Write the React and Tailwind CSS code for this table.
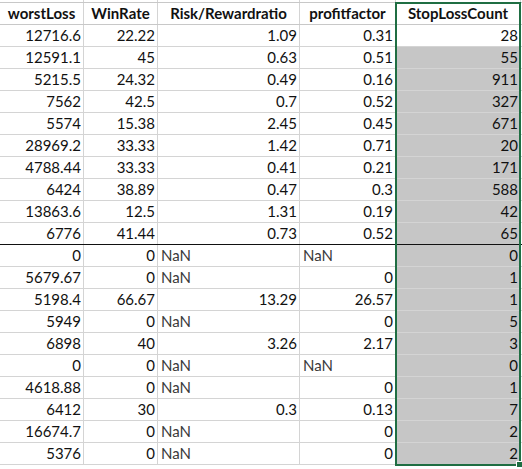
import React from "react";

const rows = [
  ["12716.6", "22.22", "1.09", "0.31", "28"],
  ["12591.1", "45", "0.63", "0.51", "55"],
  ["5215.5", "24.32", "0.49", "0.16", "911"],
  ["7562", "42.5", "0.7", "0.52", "327"],
  ["5574", "15.38", "2.45", "0.45", "671"],
  ["28969.2", "33.33", "1.42", "0.71", "20"],
  ["4788.44", "33.33", "0.41", "0.21", "171"],
  ["6424", "38.89", "0.47", "0.3", "588"],
  ["13863.6", "12.5", "1.31", "0.19", "42"],
  ["6776", "41.44", "0.73", "0.52", "65"],
  ["0", "0", "NaN", "NaN", "0"],
  ["5679.67", "0", "NaN", "0", "1"],
  ["5198.4", "66.67", "13.29", "26.57", "1"],
  ["5949", "0", "NaN", "0", "5"],
  ["6898", "40", "3.26", "2.17", "3"],
  ["0", "0", "NaN", "NaN", "0"],
  ["4618.88", "0", "NaN", "0", "1"],
  ["6412", "30", "0.3", "0.13", "7"],
  ["16674.7", "0", "NaN", "0", "2"],
  ["5376", "0", "NaN", "0", "2"],
];

const widths = ["w-[84px]", "w-[74px]", "w-[142px]", "w-[96px]", "w-[125px]"];
const headers = ["worstLoss", "WinRate", "Risk/Rewardratio", "profitfactor", "StopLossCount"];

function Cell({ i, value, selected, rowIdx }) {
  const isNaN = value === "NaN";
  const bg = selected ? "bg-[#c6c6c6] border-r-[#a8a8a8]" : "bg-white border-r-[#d4d4d4]";
  return (
    <div
      className={`${widths[i]} h-full shrink-0 border-r ${bg} flex items-end px-[2px] pb-[2px] ${
        isNaN ? "justify-start pl-[3px]" : "justify-end"
      }`}
    >
      <span className={isNaN ? "text-[#3a3a3a]" : "text-[#111]"}>{value}</span>
    </div>
  );
}

export default function App() {
  return (
    <div
      className="relative w-[522px] h-[469px] overflow-hidden bg-white text-[15px] leading-[18px]"
      style={{ fontFamily: "Lato, 'Open Sans', sans-serif" }}
    >
      {/* sliver of previous row */}
      <div className="flex h-[2px]">
        {widths.map((w, i) => (
          <div key={i} className={`${w} shrink-0 h-full border-r border-r-[#d4d4d4]`} />
        ))}
      </div>
      {/* header */}
      <div className="flex h-[23px] border-y border-[#c8c8c8]">
        {headers.map((h, i) => (
          <div
            key={i}
            className={`${widths[i]} shrink-0 h-full border-r border-r-[#d4d4d4] flex items-end justify-center pb-[2px] font-bold text-[#111]`}
          >
            {h}
          </div>
        ))}
      </div>
      {rows.map((r, ri) => (
        <div
          key={ri}
          className={`flex h-[22px] border-b ${
            ri === 9 ? "border-b-[#111]" : ri === 0 ? "border-b-[#d4d4d4]" : "border-b-[#d4d4d4]"
          }`}
        >
          {r.map((v, ci) => (
            <Cell key={ci} i={ci} value={v} selected={ci === 4 && ri > 0} rowIdx={ri} />
          ))}
        </div>
      ))}
      {/* selection border */}
      <div className="absolute left-[395px] top-[2px] w-[126px] h-[464px] border-2 border-[#1f6e43] pointer-events-none" />
      {/* fill handle */}
      <div className="absolute left-[516px] top-[461px] w-[7px] h-[7px] bg-[#1f6e43] border border-white" />
    </div>
  );
}
